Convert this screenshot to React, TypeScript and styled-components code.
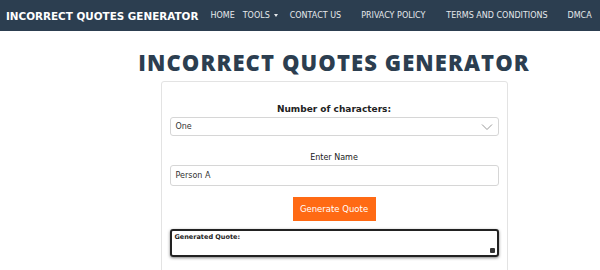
import React from "react";
import styled, { createGlobalStyle } from "styled-components";

const GlobalStyle = createGlobalStyle`
  html, body {
    margin: 0;
    padding: 0;
    background: #ffffff;
    font-family: "DejaVu Sans", Verdana, sans-serif;
    overflow: hidden;
  }
`;

const NavBar = styled.nav`
  height: 31px;
  background: #2c3e50;
  display: flex;
  align-items: center;
  padding: 0 6px;
  box-sizing: border-box;
`;

const Brand = styled.a`
  font-family: "DejaVu Sans", sans-serif;
  font-weight: bold;
  font-size: 10.4px;
  color: #ffffff;
  text-decoration: none;
  margin-right: 12px;
  white-space: nowrap;
`;

const NavItem = styled.a<{ $gap?: number }>`
  font-size: 8px;
  color: #e6e9ec;
  text-decoration: none;
  white-space: nowrap;
  margin-right: ${(p) => p.$gap ?? 18}px;
  display: flex;
  align-items: center;
`;

const Caret = styled.span`
  display: inline-block;
  margin-left: 4px;
  border-left: 2.5px solid transparent;
  border-right: 2.5px solid transparent;
  border-top: 3px solid #e6e9ec;
`;

const Main = styled.main`
  display: flex;
  flex-direction: column;
  align-items: center;
  padding-left: 68px;
`;

const Title = styled.h1`
  font-family: "Open Sans", sans-serif;
  font-weight: 800;
  font-size: 22px;
  line-height: 30px;
  letter-spacing: 1.1px;
  color: #2c3e50;
  margin: 16px 0 4px;
  white-space: nowrap;
`;

const Card = styled.section`
  width: 347px;
  box-sizing: border-box;
  border: 1px solid #e3e3e3;
  border-radius: 3px;
  padding: 22px 8px 20px;
  display: flex;
  flex-direction: column;
  align-items: stretch;
`;

const Label = styled.label<{ $bold?: boolean; $top?: number }>`
  text-align: center;
  font-size: ${(p) => (p.$bold ? 9 : 8)}px;
  line-height: ${(p) => (p.$bold ? 11 : 10)}px;
  font-weight: ${(p) => (p.$bold ? "bold" : "normal")};
  color: #222;
  margin-top: ${(p) => p.$top ?? 0}px;
  margin-bottom: 2px;
`;

const Field = styled.div<{ $h: number }>`
  height: ${(p) => p.$h}px;
  border: 1px solid #d6d6d6;
  border-radius: 3px;
  box-sizing: border-box;
  display: flex;
  align-items: center;
  justify-content: space-between;
  padding: 0 5px;
  font-size: 8px;
  color: #333;
`;

const Button = styled.button`
  align-self: center;
  width: 83px;
  height: 24px;
  background: #ff6a14;
  color: #ffffff;
  border: none;
  font-family: "DejaVu Sans", sans-serif;
  font-size: 8.5px;
  margin: 11px 0 8px;
  padding: 0;
`;

const Output = styled.div`
  position: relative;
  height: 28px;
  border: 2px solid #222;
  border-radius: 3px;
  box-sizing: border-box;
  box-shadow: 0 1px 3px rgba(0, 0, 0, 0.5);
  padding: 2px 3px;
  font-size: 6.5px;
  font-weight: bold;
  color: #222;
`;

const Grip = styled.span`
  position: absolute;
  right: 2px;
  bottom: 2px;
  width: 5px;
  height: 5px;
  background: #333;
  border-radius: 1px;
`;

const Chevron = () => (
  <svg width="12" height="8" viewBox="0 0 12 8">
    <path d="M1 1.5 L6 6.5 L11 1.5" fill="none" stroke="#999" strokeWidth="1" />
  </svg>
);

export default function App() {
  return (
    <>
      <GlobalStyle />
      <NavBar>
        <Brand>INCORRECT QUOTES GENERATOR</Brand>
        <NavItem $gap={8}>HOME</NavItem>
        <NavItem $gap={12}>
          TOOLS
          <Caret />
        </NavItem>
        <NavItem $gap={20}>CONTACT US</NavItem>
        <NavItem $gap={21}>PRIVACY POLICY</NavItem>
        <NavItem $gap={20}>TERMS AND CONDITIONS</NavItem>
        <NavItem $gap={0}>DMCA</NavItem>
      </NavBar>
      <Main>
        <Title>INCORRECT QUOTES GENERATOR</Title>
        <Card>
          <Label $bold>Number of characters:</Label>
          <Field $h={19}>
            One
            <Chevron />
          </Field>
          <Label $top={17}>Enter Name</Label>
          <Field $h={21}>Person A</Field>
          <Button>Generate Quote</Button>
          <Output>
            Generated Quote:
            <Grip />
          </Output>
        </Card>
      </Main>
    </>
  );
}
